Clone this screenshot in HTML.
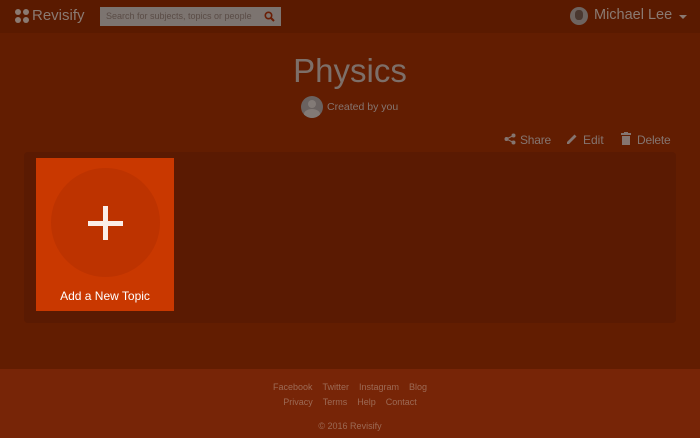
<!DOCTYPE html>
<html><head><style>
*{margin:0;padding:0;box-sizing:border-box}
body{width:700px;height:438px;background:#621d01;font-family:"Liberation Sans",sans-serif;position:relative;overflow:hidden;color:#8a7a72}
.hdr{position:absolute;left:0;top:0;width:700px;height:33px;background:#5a1a00}
.abs{position:absolute}
.panel{position:absolute;left:24px;top:152px;width:652px;height:171px;background:#5a1a02;border-radius:4px}
.card{position:absolute;left:36px;top:158px;width:138px;height:153px;background:#c93800}
.circ{position:absolute;left:15px;top:10px;width:109px;height:109px;border-radius:50%;background:#bd3300}
.footer{position:absolute;left:0;top:369px;width:700px;height:69px;background:#772507;text-align:center;font-size:9px;color:#9c6a55}
</style></head><body>
<div class="hdr">
 <div class="abs" style="left:15px;top:9px;width:14px;height:14px">
  <div class="abs" style="left:0;top:0;width:6px;height:6px;border-radius:50%;background:#8a7a72"></div>
  <div class="abs" style="left:8px;top:0;width:6px;height:6px;border-radius:50%;background:#8a7a72"></div>
  <div class="abs" style="left:0;top:8px;width:6px;height:6px;border-radius:50%;background:#8a7a72"></div>
  <div class="abs" style="left:8px;top:8px;width:6px;height:6px;border-radius:50%;background:#8a7a72"></div>
 </div>
 <div class="abs" style="left:32px;top:7px;font-size:15px;color:#8a7a72">Revisify</div>
 <div class="abs" style="left:100px;top:7px;width:181px;height:19px;background:#7c7470;"></div>
 <div class="abs" style="left:106px;top:11px;font-size:9px;color:#5a4c46">Search for subjects, topics or people</div>
 <svg class="abs" style="left:264px;top:11px" width="11" height="11" viewBox="0 0 11 11"><circle cx="4.5" cy="4.5" r="3.2" fill="none" stroke="#6a1e05" stroke-width="1.6"/><path d="M7 7L10 10" stroke="#6a1e05" stroke-width="2"/></svg>
 <div class="abs" style="left:570px;top:7px;width:18px;height:18px;border-radius:50%;background:#6e6460"></div>
 <div class="abs" style="left:575px;top:10px;width:8px;height:10px;border-radius:40%;background:#4a3830"></div>
 <div class="abs" style="left:594px;top:7px;font-size:14.5px;color:#8a7a72">Michael Lee</div>
 <div class="abs" style="left:679px;top:15px;width:0;height:0;border-left:4px solid transparent;border-right:4px solid transparent;border-top:4px solid #8a7a72"></div>
</div>
<div class="abs" style="left:0;width:700px;top:52px;text-align:center;font-size:33px;color:#7d6f69">Physics</div>
<div class="abs" style="left:301px;top:96px;width:22px;height:22px;border-radius:50%;background:#6a6260;overflow:hidden">
 <div class="abs" style="left:7px;top:4px;width:8px;height:8px;border-radius:50%;background:#827a76"></div>
 <div class="abs" style="left:3px;top:13px;width:16px;height:10px;border-radius:50% 50% 0 0;background:#827a76"></div>
</div>
<div class="abs" style="left:327px;top:101px;font-size:10.5px;color:#857570">Created by you</div>
<svg class="abs" style="left:504px;top:133px" width="12" height="12" viewBox="0 0 12 12" fill="#857570"><circle cx="9.5" cy="2.5" r="2"/><circle cx="2.5" cy="6" r="2"/><circle cx="9.5" cy="9.5" r="2"/><path d="M2.5 6L9.5 2.5M2.5 6L9.5 9.5" stroke="#857570" stroke-width="1.2"/></svg>
<div class="abs" style="left:520px;top:133px;font-size:12px;color:#857570;letter-spacing:-0.2px">Share</div>
<svg class="abs" style="left:566px;top:133px" width="12" height="12" viewBox="0 0 12 12" fill="#857570"><path d="M1 9L8.5 1.5L10.5 3.5L3 11H1Z"/></svg>
<div class="abs" style="left:583px;top:133px;font-size:12px;color:#857570">Edit</div>
<svg class="abs" style="left:621px;top:132px" width="10" height="13" viewBox="0 0 10 13" fill="#857570"><rect x="0" y="1" width="10" height="2"/><rect x="3" y="0" width="4" height="2"/><rect x="1" y="4" width="8" height="9"/></svg>
<div class="abs" style="left:637px;top:133px;font-size:12px;color:#857570;letter-spacing:-0.2px">Delete</div>
<div class="panel"></div>
<div class="card"><div class="circ"></div>
 <div class="abs" style="left:67px;top:48px;width:5px;height:34px;background:#fbeee8"></div>
 <div class="abs" style="left:52px;top:63px;width:35px;height:5px;background:#fbeee8"></div>
 <div class="abs" style="left:0;width:138px;top:131px;text-align:center;font-size:12px;color:#fff">Add a New Topic</div>
</div>
<div class="footer">
 <div style="position:absolute;top:13px;width:700px">Facebook&nbsp;&nbsp;&nbsp;&nbsp;Twitter&nbsp;&nbsp;&nbsp;&nbsp;Instagram&nbsp;&nbsp;&nbsp;&nbsp;Blog</div>
 <div style="position:absolute;top:28px;width:700px">Privacy&nbsp;&nbsp;&nbsp;&nbsp;Terms&nbsp;&nbsp;&nbsp;&nbsp;Help&nbsp;&nbsp;&nbsp;&nbsp;Contact</div>
 <div style="position:absolute;top:52px;width:700px">© 2016 Revisify</div>
</div>
</body></html>
